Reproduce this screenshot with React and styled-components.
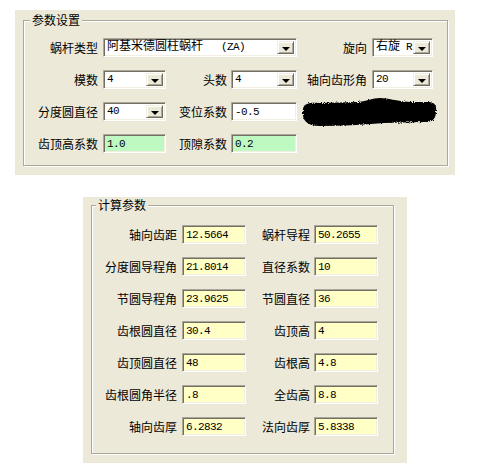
import React from 'react';
import styled, { createGlobalStyle } from 'styled-components';

const GlobalStyle = createGlobalStyle`
  body {
    margin: 0;
    background: #fff;
    color: #000;
    font-family: "Noto Sans CJK SC", "Noto Sans", sans-serif;
    font-size: 12px;
  }
`;

const Page = styled.div`
  display: flex;
  flex-direction: column;
  align-items: flex-start;
  gap: 22px;
  padding: 10px 0 0 15px;
`;

const Panel = styled.div`
  box-sizing: border-box;
  width: ${({ $w }) => $w}px;
  height: ${({ $h }) => $h}px;
  margin-left: ${({ $left }) => $left || 0}px;
  padding: ${({ $pad }) => $pad};
  background: #ece9d8;
`;

const Group = styled.div`
  position: relative;
  box-sizing: border-box;
  width: ${({ $w }) => $w}px;
  height: ${({ $h }) => $h}px;
  padding: ${({ $pad }) => $pad};
  border: 1px solid #aca899;
  box-shadow: inset 1px 1px 0 #fff, 1px 1px 0 #fff;
`;

const GroupTitle = styled.span`
  position: absolute;
  top: -8px;
  left: ${({ $left }) => $left}px;
  padding: 0 2px;
  background: #ece9d8;
  line-height: 14px;
  white-space: nowrap;
`;

const Grid = styled.div`
  display: grid;
  grid-template-columns: ${({ $cols }) => $cols};
  grid-auto-rows: 19px;
  row-gap: 13px;
`;

const Label = styled.div`
  grid-column: ${({ $col }) => $col || 'auto'};
  padding-right: ${({ $pr }) => $pr || 5}px;
  text-align: right;
  line-height: 19px;
  white-space: nowrap;
`;

const sunken = `
  box-sizing: border-box;
  border: 1px solid;
  border-color: #aca899 #fff #fff #aca899;
  box-shadow: inset 1px 1px 0 #716f64, inset -1px -1px 0 #f1efe2;
`;

const tones = {
  white: '#ffffff',
  green: '#bff9c2',
  yellow: '#ffffc6',
};

const Edit = styled.div`
  ${sunken};
  grid-column: ${({ $col }) => $col || 'auto'};
  width: 100%;
  height: 19px;
  padding: 1px 3px 0;
  background: ${({ $tone }) => tones[$tone || 'white']};
  font-family: "Liberation Mono", monospace;
  font-size: 11px;
  letter-spacing: -0.6px;
  line-height: 16px;
  white-space: pre;
`;

const Combo = styled.div`
  ${sunken};
  grid-column: ${({ $col }) => $col || 'auto'};
  display: flex;
  align-items: stretch;
  width: 100%;
  height: 19px;
  padding: 2px;
  background: #fff;
`;

const ComboValue = styled.div`
  flex: 1;
  padding-left: 1px;
  font-family: "Liberation Mono", monospace;
  font-size: 11px;
  letter-spacing: -0.6px;
  line-height: 13px;
  white-space: pre;
`;

const Cjk = styled.span`
  font-family: "Noto Sans CJK SC", sans-serif;
  font-size: 12px;
  letter-spacing: 0;
  line-height: 0;
`;

const DropButton = styled.div`
  box-sizing: border-box;
  display: flex;
  align-items: center;
  justify-content: center;
  width: 17px;
  border: 1px solid;
  border-color: #f1efe2 #716f64 #716f64 #f1efe2;
  box-shadow: inset 1px 1px 0 #fff, inset -1px -1px 0 #aca899;
  background: #ece9d8;

  &::after {
    content: '';
    margin-top: 2px;
    border-left: 4px solid transparent;
    border-right: 4px solid transparent;
    border-top: 4px solid #000;
  }
`;

const Redaction = styled.svg`
  grid-column: 5 / 7;
  margin: -4px 0 0 3px;
  overflow: visible;
`;

function ComboBox({ col, children }) {
  return (
    <Combo $col={col}>
      <ComboValue>{children}</ComboValue>
      <DropButton />
    </Combo>
  );
}

const results = [
  ['轴向齿距', '12.5664', '蜗杆导程', '50.2655'],
  ['分度圆导程角', '21.8014', '直径系数', '10'],
  ['节圆导程角', '23.9625', '节圆直径', '36'],
  ['齿根圆直径', '30.4', '齿顶高', '4'],
  ['齿顶圆直径', '48', '齿根高', '4.8'],
  ['齿根圆角半径', '.8', '全齿高', '8.8'],
  ['轴向齿厚', '6.2832', '法向齿厚', '5.8338'],
];

export default function App() {
  return (
    <>
      <GlobalStyle />
      <Page>
        <Panel $w={440} $h={165} $pad="10px 8px 0">
          <Group $w={425} $h={146} $pad="17px 6px 0">
            <GroupTitle $left={6}>参数设置</GroupTitle>
            <Grid $cols="73px 63px 65px 66px 75px 61px">
              <Label>蜗杆类型</Label>
              <ComboBox col="2 / 5">
                <Cjk>阿基米德圆柱蜗杆</Cjk>
                {'   (ZA)'}
              </ComboBox>
              <Label>旋向</Label>
              <ComboBox>
                <Cjk>右旋</Cjk>
                {' R'}
              </ComboBox>

              <Label>模数</Label>
              <ComboBox>4</ComboBox>
              <Label $pr={4}>头数</Label>
              <ComboBox>4</ComboBox>
              <Label>轴向齿形角</Label>
              <ComboBox>20</ComboBox>

              <Label>分度圆直径</Label>
              <ComboBox>40</ComboBox>
              <Label $pr={4}>变位系数</Label>
              <Edit>-0.5</Edit>
              <Redaction width="137" height="28" viewBox="0 0 137 28">
                <defs>
                  <filter id="rough" x="-5%" y="-20%" width="110%" height="140%">
                    <feTurbulence type="fractalNoise" baseFrequency="0.9" numOctaves="2" seed="3" />
                    <feDisplacementMap in="SourceGraphic" scale="3" />
                  </filter>
                </defs>
                <path
                  filter="url(#rough)"
                  fill="#050505"
                  d="M3 14 C2 6 8 4 20 5 L58 4 C68 3 72 0 80 0 C88 0 96 3 110 4 L128 4 C134 4 137 7 136 13 C136 21 133 24 124 24 L84 25 C62 27 40 28 20 28 C7 28 2 22 3 14 Z"
                />
              </Redaction>

              <Label>齿顶高系数</Label>
              <Edit $tone="green">1.0</Edit>
              <Label $pr={4}>顶隙系数</Label>
              <Edit $tone="green">0.2</Edit>
            </Grid>
          </Group>
        </Panel>

        <Panel $w={324} $h={266} $left={68} $pad="8px 13px 0 8px">
          <Group $w={303} $h={249} $pad="19px 4px 0">
            <GroupTitle $left={4}>计算参数</GroupTitle>
            <Grid $cols="86px 64px 68px 64px">
              {results.map(([l1, v1, l2, v2]) => (
                <React.Fragment key={l1}>
                  <Label>{l1}</Label>
                  <Edit $tone="yellow">{v1}</Edit>
                  <Label $pr={4}>{l2}</Label>
                  <Edit $tone="yellow">{v2}</Edit>
                </React.Fragment>
              ))}
            </Grid>
          </Group>
        </Panel>
      </Page>
    </>
  );
}
